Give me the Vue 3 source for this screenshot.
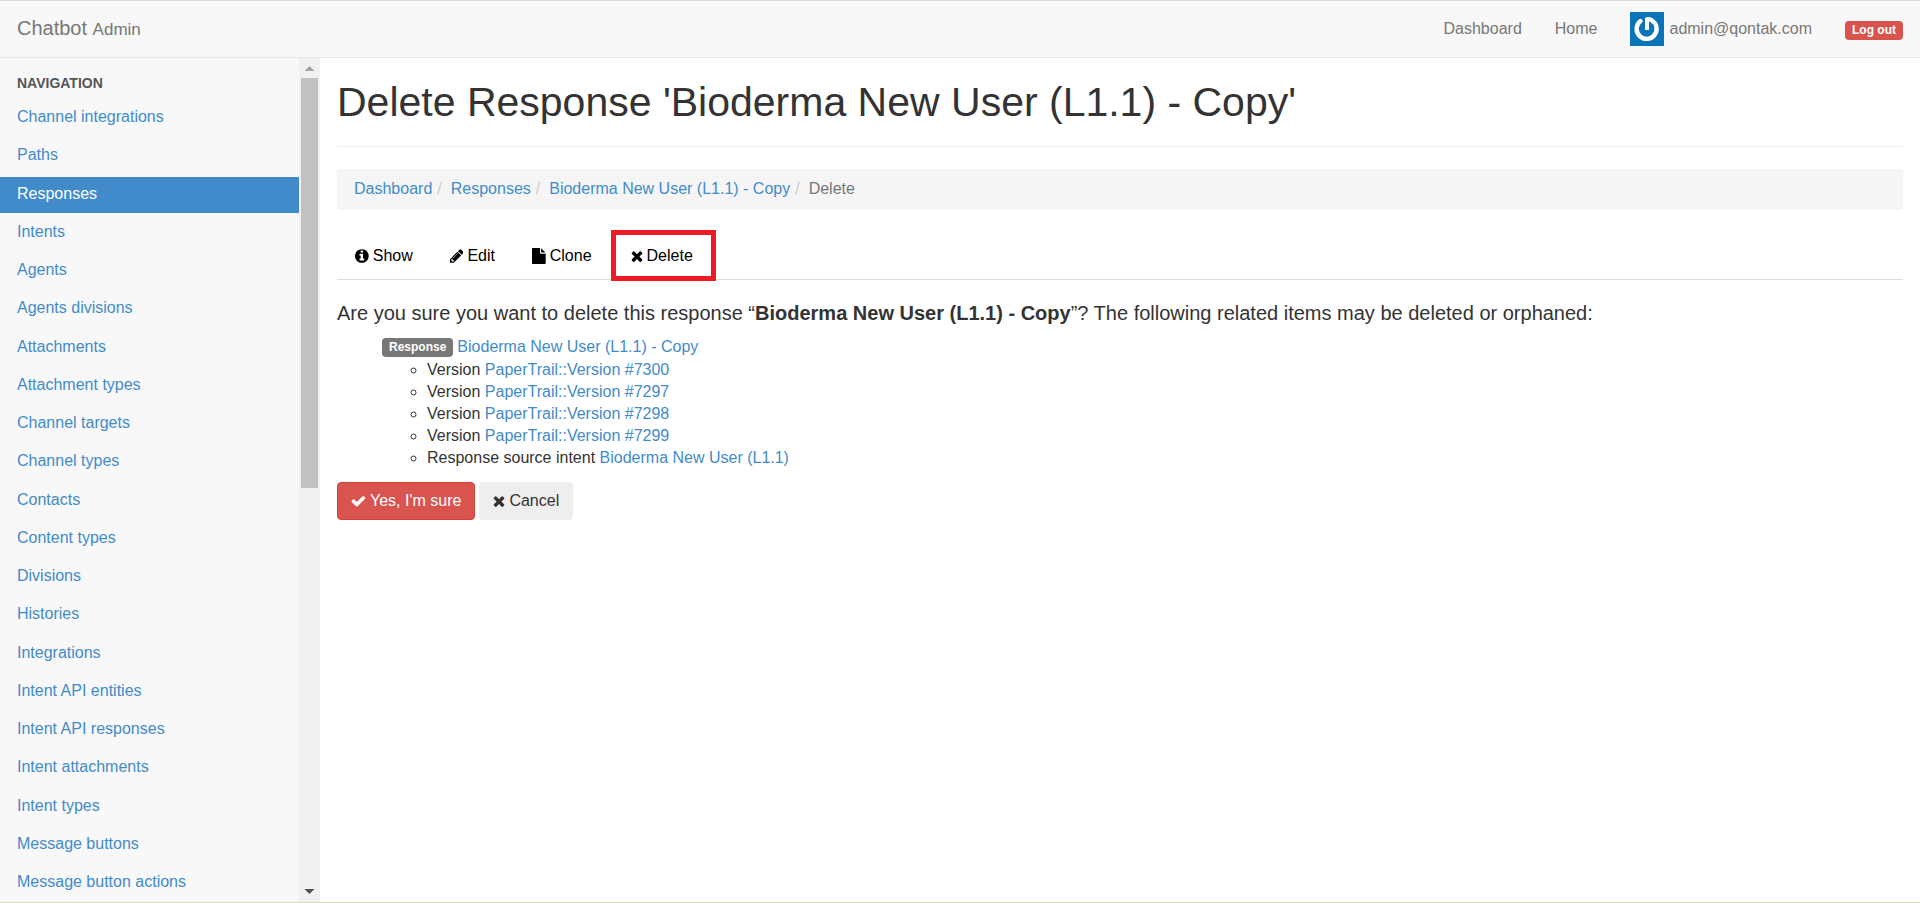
<script setup>
const navItems = [
  'Channel integrations', 'Paths', 'Responses', 'Intents', 'Agents', 'Agents divisions',
  'Attachments', 'Attachment types', 'Channel targets', 'Channel types', 'Contacts',
  'Content types', 'Divisions', 'Histories', 'Integrations', 'Intent API entities',
  'Intent API responses', 'Intent attachments', 'Intent types', 'Message buttons',
  'Message button actions',
]
const activeItem = 'Responses'

const crumbs = ['Dashboard', 'Responses', 'Bioderma New User (L1.1) - Copy']

const icons = {
  info: {
    box: '128 0 1536 1792',
    d: 'M1152 1376v-160q0-14-9-23t-23-9h-96v-512q0-14-9-23t-23-9h-320q-14 0-23 9t-9 23v160q0 14 9 23t23 9h96v320h-96q-14 0-23 9t-9 23v160q0 14 9 23t23 9h448q14 0 23-9t9-23zm-128-896v-160q0-14-9-23t-23-9h-192q-14 0-23 9t-9 23v160q0 14 9 23t23 9h192q14 0 23-9t9-23zm640 416q0 209-103 385.5t-279.5 279.5-385.5 103-385.5-103-279.5-279.5-103-385.5 103-385.5 279.5-279.5 385.5-103 385.5 103 279.5 279.5 103 385.5z',
  },
  pencil: {
    box: '128 0 1536 1792',
    d: 'M491 1536l91-91-235-235-91 91v107h128v128h107zm523-928q0-22-22-22-10 0-17 7l-542 542q-7 7-7 17 0 22 22 22 10 0 17-7l542-542q7-7 7-17zm-54-192l416 416-832 832h-416v-416zm683 96q0 53-37 90l-166 166-416-416 166-165q36-38 90-38 53 0 91 38l235 234q37 39 37 91z',
  },
  file: {
    box: '128 0 1536 1792',
    d: 'M1152 512v-472q22 14 36 28l408 408q14 14 28 36h-472zm-128 32q0 40 28 68t68 28h544v1056q0 40-28 68t-68 28h-1344q-40 0-68-28t-28-68v-1600q0-40 28-68t68-28h800v544z',
  },
  times: {
    box: '224 0 1344 1792',
    d: 'M1490 1322q0 40-28 68l-136 136q-28 28-68 28t-68-28l-294-294-294 294q-28 28-68 28t-68-28l-136-136q-28-28-28-68t28-68l294-294-294-294q-28-28-28-68t28-68l136-136q28-28 68-28t68 28l294 294 294-294q28-28 68-28t68 28l136 136q28 28 28 68t-28 68l-294 294 294 294q28 28 28 68z',
  },
  check: {
    box: '64 0 1680 1792',
    d: 'M1671 566q0 40-28 68l-724 724-136 136q-28 28-68 28t-68-28l-136-136-362-362q-28-28-28-68t28-68l136-136q28-28 68-28t68 28l294 295 656-657q28-28 68-28t68 28l136 136q28 28 28 68z',
  },
}

const tabs = [
  { label: 'Show', icon: icons.info },
  { label: 'Edit', icon: icons.pencil },
  { label: 'Clone', icon: icons.file },
  { label: 'Delete', icon: icons.times, active: true },
]

const related = [
  { kind: 'Version', name: 'PaperTrail::Version #7300' },
  { kind: 'Version', name: 'PaperTrail::Version #7297' },
  { kind: 'Version', name: 'PaperTrail::Version #7298' },
  { kind: 'Version', name: 'PaperTrail::Version #7299' },
  { kind: 'Response source intent', name: 'Bioderma New User (L1.1)' },
]
</script>

<template>
  <div class="page">
    <header class="topbar">
      <a href="#" class="brand">Chatbot <small>Admin</small></a>
      <nav class="top-links" aria-label="Account">
        <a href="#">Dashboard</a>
        <a href="#">Home</a>
        <a href="#" class="user">
          <svg class="avatar" viewBox="0 0 34 34" aria-hidden="true">
            <rect width="34" height="34" fill="#0a74b9" />
            <path d="M10.500 9A10 10 0 1 0 22 8.500" fill="none" stroke="#fff" stroke-width="4.400" stroke-linecap="round" />
            <path d="M15 6Q18 4 23 6.500L22 10L19 9.500V18H15Z" fill="#fff" />
          </svg>
          <span>admin@qontak.com</span>
        </a>
        <a href="#" class="logout"><span class="tag danger">Log out</span></a>
      </nav>
    </header>

    <div class="body">
      <aside class="sidebar">
        <nav class="side-nav" aria-label="Navigation">
          <h2 class="side-title">NAVIGATION</h2>
          <ul class="side-list">
            <li v-for="item in navItems" :key="item">
              <a href="#" :class="{ active: item === activeItem }">{{ item }}</a>
            </li>
          </ul>
        </nav>
        <div class="scrollbar" aria-hidden="true">
          <svg class="arrow" viewBox="0 0 20 20"><path d="M5 13h10L10 8z" fill="#a3a3a3" /></svg>
          <div class="track"><div class="thumb"></div></div>
          <svg class="arrow" viewBox="0 0 20 20"><path d="M5 7h10L10 12z" fill="#505050" /></svg>
        </div>
      </aside>

      <main class="content">
        <h1 class="title">Delete Response 'Bioderma New User (L1.1) - Copy'</h1>

        <ol class="breadcrumb">
          <li v-for="c in crumbs" :key="c"><a href="#">{{ c }}</a><span class="slash">/</span></li>
          <li class="current">Delete</li>
        </ol>

        <ul class="tabs">
          <li v-for="t in tabs" :key="t.label">
            <a href="#" :class="{ marked: t.active }">
              <svg class="icon" :viewBox="t.icon.box" aria-hidden="true"><path :d="t.icon.d" /></svg>
              <span>{{ t.label }}</span>
            </a>
          </li>
        </ul>

        <p class="question">Are you sure you want to delete this response “<strong>Bioderma New User (L1.1) - Copy</strong>”? The following related items may be deleted or orphaned:</p>

        <div class="related">
          <div class="related-head">
            <span class="tag neutral">Response</span>
            <a href="#">Bioderma New User (L1.1) - Copy</a>
          </div>
          <ul class="related-list">
            <li v-for="r in related" :key="r.name">{{ r.kind }} <a href="#">{{ r.name }}</a></li>
          </ul>
        </div>

        <div class="actions">
          <button type="button" class="btn confirm">
            <svg class="icon" :viewBox="icons.check.box" aria-hidden="true"><path :d="icons.check.d" /></svg>
            <span>Yes, I'm sure</span>
          </button>
          <button type="button" class="btn cancel">
            <svg class="icon" :viewBox="icons.times.box" aria-hidden="true"><path :d="icons.times.d" /></svg>
            <span>Cancel</span>
          </button>
        </div>
      </main>
    </div>
  </div>
</template>

<style>
body {
  margin: 0;
  background: #fff;
}
</style>

<style scoped>
.page {
  display: flex;
  flex-direction: column;
  box-sizing: border-box;
  min-height: 100vh;
  border-top: 1px solid #dadada;
  border-bottom: 1px solid #d9deb4;
  font-family: "Liberation Sans", Arial, sans-serif;
  font-size: 16px;
  line-height: 22px;
  color: #333;
}

a {
  color: #428bca;
  text-decoration: none;
}

ul,
ol {
  margin: 0;
  padding: 0;
  list-style: none;
}

.topbar {
  display: flex;
  align-items: center;
  justify-content: space-between;
  box-sizing: border-box;
  height: 57px;
  padding: 0 17px;
  background: #f8f8f8;
  border-bottom: 1px solid #e7e7e7;
}

.topbar a {
  color: #777;
}

.brand {
  font-size: 20px;
}

.brand small {
  font-size: 17px;
}

.top-links {
  display: flex;
  align-items: center;
  gap: 33px;
}

.user {
  display: flex;
  align-items: center;
  gap: 5px;
}

.avatar {
  width: 34px;
  height: 34px;
}

.logout {
  display: flex;
  padding-top: 2px;
}

.tag {
  padding: 0 7px;
  border-radius: 4px;
  font-size: 12px;
  line-height: 19px;
  font-weight: 700;
  color: #fff;
}

.danger {
  background: #d9534f;
}

.neutral {
  background: #777;
}

.body {
  display: flex;
  flex: 1;
}

.sidebar {
  display: flex;
  flex: none;
  width: 16.6667%;
  background: #f8f8f8;
}

.side-nav {
  display: flex;
  flex: 1;
  flex-direction: column;
}

.side-title {
  margin: 0;
  padding: 14px 17px 6px;
  font-size: 14px;
  line-height: 22px;
  font-weight: 700;
  color: #555;
}

.side-list {
  display: flex;
  flex: 1;
  flex-direction: column;
  justify-content: space-between;
  padding-bottom: 1px;
}

.side-list a {
  display: block;
  padding: 6px 17px 8px;
}

.side-list .active {
  background: #428bca;
  color: #fff;
}

.scrollbar {
  display: flex;
  flex-direction: column;
  width: 21px;
  background: #f1f1f1;
}

.arrow {
  width: 21px;
  height: 20px;
}

.track {
  flex: 1;
  padding: 0 2px;
}

.thumb {
  height: 51%;
  background: #c1c1c1;
}

.content {
  flex: 1;
  padding: 0 17px;
}

.title {
  margin: 0 0 22px;
  padding: 21px 0;
  border-bottom: 1px solid #eee;
  font-size: 41px;
  line-height: 46px;
  font-weight: 400;
}

.breadcrumb {
  display: flex;
  flex-wrap: wrap;
  margin-bottom: 22px;
  padding: 9px 17px 10px;
  border-radius: 4px;
  background: #f5f5f5;
}

.slash {
  padding: 0 9px 0 5px;
  color: #ccc;
}

.current {
  color: #777;
}

.tabs {
  display: flex;
  margin-bottom: 21px;
  border-bottom: 1px solid #ddd;
}

.tabs a {
  display: flex;
  align-items: center;
  gap: 4px;
  height: 47px;
  padding: 0 19px 0 18px;
  color: #000;
}

.tabs .marked {
  box-sizing: border-box;
  height: 51px;
  margin: -2px 0;
  padding: 0 18px 0 15px;
  border: 5px solid #ed1c24;
}

.icon {
  flex: none;
  width: auto;
  height: 16px;
  fill: currentColor;
}

.question {
  margin: 0 0 11px;
  font-size: 20px;
  line-height: 24px;
}

.related {
  padding-left: 45px;
}

.related-head {
  display: flex;
  align-items: center;
  gap: 4px;
  padding-bottom: 1px;
}

.related-list {
  padding-left: 45px;
  list-style: circle;
}

.actions {
  display: flex;
  gap: 4px;
  margin-top: 13px;
}

.btn {
  display: flex;
  align-items: center;
  gap: 4px;
  height: 38px;
  padding: 0 13px;
  border: 1px solid #eee;
  border-radius: 4px;
  font: inherit;
}

.confirm {
  border-color: #d43f3a;
  background: #d9534f;
  color: #fff;
}

.cancel {
  background: #eee;
  color: #333;
}
</style>
